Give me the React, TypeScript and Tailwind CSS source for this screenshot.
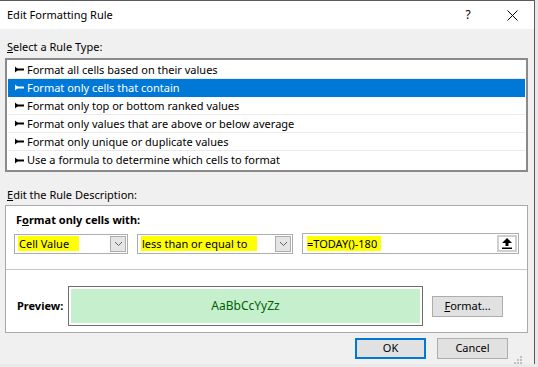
import React from "react"

const rules = [
  "Format all cells based on their values",
  "Format only cells that contain",
  "Format only top or bottom ranked values",
  "Format only values that are above or below average",
  "Format only unique or duplicate values",
  "Use a formula to determine which cells to format",
]

function RuleIcon({ color }: { color: string }) {
  return (
    <svg width="9" height="7" viewBox="0 0 9 7" className="shrink-0">
      <polygon points="0,0.5 0,6.5 3.5,3.5" fill={color} />
      <rect x="0" y="2.5" width="9" height="2" fill={color} />
    </svg>
  )
}

function Chevron() {
  return (
    <svg width="9" height="6" viewBox="0 0 9 6">
      <polyline points="1,1 4.5,4.5 8,1" fill="none" stroke="#606060" strokeWidth="1" />
    </svg>
  )
}

function Combo({ label, className }: { label: string; className: string }) {
  return (
    <div className={`flex h-[20px] items-center border border-[#adadad] bg-white pl-[3px] ${className}`}>
      <span className="flex-1 leading-[16px]">
        <span className="bg-[#ffff00] pr-[10px] pl-[1px]">{label}</span>
      </span>
      <div className="mr-px flex h-[16px] w-[16px] items-center justify-center border border-[#adadad] bg-[#e5e5e5]">
        <Chevron />
      </div>
    </div>
  )
}

export default function App() {
  return (
    <div className="flex h-[367px] w-[538px] bg-[#e9e9e9] font-['Segoe_UI','Noto_Sans',sans-serif] text-[11px] text-black">
      <div className="flex h-[364px] w-[535px] flex-col border-t border-r border-[#5a5a5a] bg-[#f0f0f0]">
        {/* title bar */}
        <div className="flex h-[30px] items-center bg-white pl-[7px]">
          <span className="flex-1 text-[11px]">Edit Formatting Rule</span>
          <span className="w-[44px] text-center text-[12px]">?</span>
          <span className="flex w-[44px] items-center justify-center">
            <svg width="11" height="11" viewBox="0 0 11 11">
              <path d="M0.5 0.5 L10.5 10.5 M10.5 0.5 L0.5 10.5" stroke="#000" strokeWidth="1" />
            </svg>
          </span>
        </div>

        <div className="flex flex-col px-[5px] pr-[6px]">
          <div className="mt-[10px] mb-[3px] pl-[2px] leading-[16px]">
            <span className="underline">S</span>elect a Rule Type:
          </div>
          <div className="flex flex-col border-2 border-[#8a8a8a] bg-white px-px py-px">
            {rules.map((r, i) => (
              <div
                key={r}
                className={`flex h-[18px] items-center gap-[3px] border-b pl-[7px] ${
                  i === 1 ? "border-[#0078d7] bg-[#0078d7] text-white" : "border-[#ebebeb]"
                } ${i === rules.length - 1 ? "border-b-0" : ""}`}
              >
                <RuleIcon color={i === 1 ? "#ffffff" : "#000000"} />
                <span className="leading-[16px]">{r}</span>
              </div>
            ))}
          </div>

          <div className="mt-[15px] mb-[2px] pl-[2px] leading-[16px]">
            <span className="underline">E</span>dit the Rule Description:
          </div>
          <div className="flex h-[128px] flex-col border border-[#a9a9a9] bg-white">
            <div className="pt-[6px] pl-[10px] font-bold leading-[16px]">
              F<span className="underline">o</span>rmat only cells with:
            </div>
            <div className="mt-[5px] flex items-center pl-[8px]">
              <Combo label="Cell Value" className="w-[114px]" />
              <Combo label="less than or equal to" className="ml-[9px] w-[156px]" />
              <div className="ml-[9px] flex h-[21px] w-[217px] items-center border border-[#adadad] bg-white pl-[4px]">
                <span className="flex-1 leading-[16px]">
                  <span className="bg-[#ffff00] pr-[4px]">=TODAY()-180</span>
                </span>
                <div className="mr-px flex h-[17px] w-[20px] items-center justify-center border-2 border-[#cfcfcf] bg-white">
                  <svg width="10" height="11" viewBox="0 0 10 11">
                    <polygon points="5,0 10,5 6.5,5 6.5,8 3.5,8 3.5,5 0,5" fill="#000" />
                    <rect x="0" y="9.5" width="10" height="1.5" fill="#000" />
                  </svg>
                </div>
              </div>
            </div>
            <div className="mt-[15px] border-t border-[#c8c8c8]" />
            <div className="mt-[16px] flex items-center pl-[11px]">
              <span className="w-[51px] font-bold">Preview:</span>
              <div className="h-[40px] w-[355px] border border-[#6d6d6d] bg-white p-[2px]">
                <div className="flex h-full items-center justify-center bg-[#c6efce] text-[12px] text-[#006100]">
                  AaBbCcYyZz
                </div>
              </div>
              <button className="ml-[9px] h-[21px] w-[71px] border border-[#adadad] bg-[#e1e1e1] text-[11px]">
                <span className="underline">F</span>ormat...
              </button>
            </div>
          </div>

          <div className="mt-[5px] flex items-center justify-end pr-[20px]">
            <button className="h-[21px] w-[71px] border-2 border-[#0078d7] bg-[#e1e1e1] text-[11px]">OK</button>
            <button className="ml-[11px] h-[21px] w-[71px] border border-[#adadad] bg-[#e1e1e1] text-[11px]">
              Cancel
            </button>
          </div>
          <div className="mt-[-3px] flex justify-end pr-[6px]">
            <svg width="8" height="8" viewBox="0 0 8 8">
              <rect x="6" y="0" width="2" height="2" fill="#c0c0c0" />
              <rect x="3" y="3" width="2" height="2" fill="#c0c0c0" />
              <rect x="6" y="3" width="2" height="2" fill="#c0c0c0" />
              <rect x="0" y="6" width="2" height="2" fill="#c0c0c0" />
              <rect x="3" y="6" width="2" height="2" fill="#c0c0c0" />
              <rect x="6" y="6" width="2" height="2" fill="#c0c0c0" />
            </svg>
          </div>
        </div>
      </div>
    </div>
  )
}
